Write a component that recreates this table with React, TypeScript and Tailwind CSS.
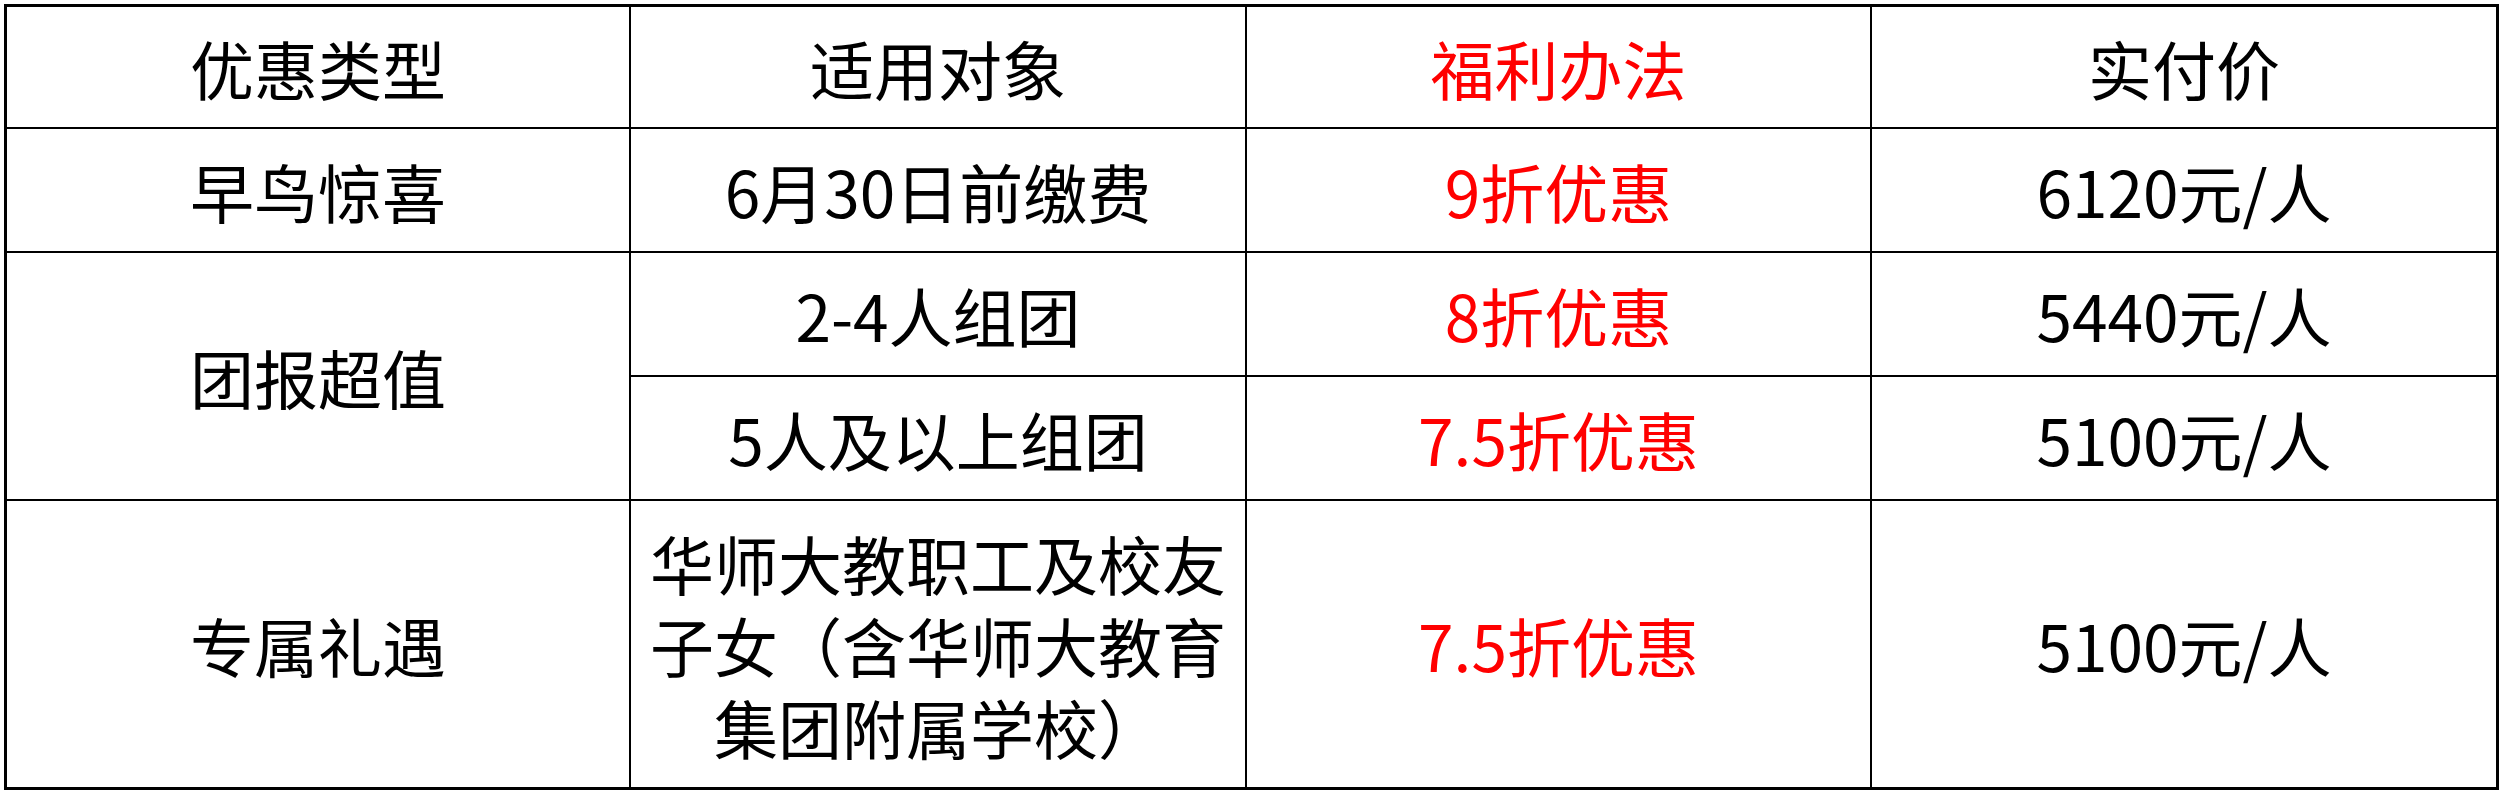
const cell = 'flex items-center justify-center bg-white text-center';

function Cell({
  children,
  red,
  head,
  className = '',
}: {
  children: React.ReactNode;
  red?: boolean;
  head?: boolean;
  className?: string;
}) {
  return (
    <div
      className={`${cell} ${head ? 'bg-[#d9e2f3]' : 'bg-white'} ${red ? 'text-[#ff0000]' : 'text-black'} ${className}`}
    >
      {children}
    </div>
  );
}

export default function App() {
  return (
    <div className="h-[806px] w-[2507px] bg-white pl-[4px] pt-[4px]">
      <div
        className="grid w-fit grid-cols-[622px_614px_623px_624px] grid-rows-[120px_122px_122px_122px_286px] gap-[2px] bg-black p-[3px] text-[64px] leading-none"
        style={{ fontFamily: '"Noto Sans CJK SC", "Noto Sans", sans-serif' }}
      >
        <Cell head>优惠类型</Cell>
        <Cell head>适用对象</Cell>
        <Cell head red>福利办法</Cell>
        <Cell head>实付价</Cell>

        <Cell>早鸟惊喜</Cell>
        <Cell>6月30日前缴费</Cell>
        <Cell red>9折优惠</Cell>
        <Cell>6120元/人</Cell>

        <Cell className="row-span-2">团报超值</Cell>
        <Cell>2-4人组团</Cell>
        <Cell red>8折优惠</Cell>
        <Cell>5440元/人</Cell>

        <Cell>5人及以上组团</Cell>
        <Cell red>7.5折优惠</Cell>
        <Cell>5100元/人</Cell>

        <Cell>专属礼遇</Cell>
        <Cell className="flex-col leading-[82px]">
          <span className="block">华师大教职工及校友</span>
          <span className="block">子女（含华师大教育</span>
          <span className="block">集团附属学校）</span>
        </Cell>
        <Cell red>7.5折优惠</Cell>
        <Cell>5100元/人</Cell>
      </div>
    </div>
  );
}
